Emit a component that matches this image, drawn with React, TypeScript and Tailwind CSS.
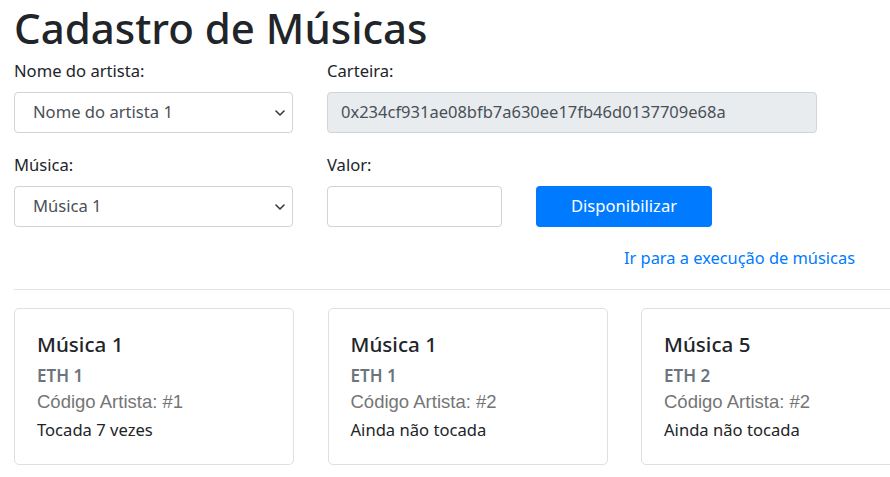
import React from "react";

interface Song {
  title: string;
  price: string;
  artist: string;
  plays: string;
}

const songs: Song[] = [
  { title: "Música 1", price: "ETH 1", artist: "#1", plays: "Tocada 7 vezes" },
  { title: "Música 1", price: "ETH 1", artist: "#2", plays: "Ainda não tocada" },
  { title: "Música 5", price: "ETH 2", artist: "#2", plays: "Ainda não tocada" },
];

function Chevron() {
  return (
    <svg width="10" height="6" viewBox="0 0 10 6" className="shrink-0">
      <path d="M1 1l4 4 4-4" fill="none" stroke="#343a40" strokeWidth="1.6" strokeLinecap="round" strokeLinejoin="round" />
    </svg>
  );
}

function Select({ value }: { value: string }) {
  return (
    <div className="flex h-[41px] items-center justify-between rounded-[4px] border border-[#ced4da] bg-white pl-[18px] pr-[7px] text-[16.6px] text-[#495057]">
      <span>{value}</span>
      <Chevron />
    </div>
  );
}

function Label({ children }: { children: React.ReactNode }) {
  return <label className="mb-[8px] block text-[16.6px] leading-[26px]">{children}</label>;
}

function SongCard({ song }: { song: Song }) {
  return (
    <div className="h-[157px] w-[280px] shrink-0 rounded-[5px] border border-[#dfdfdf] px-[22px] pt-[22px]">
      <h5 className="mb-[8px] text-[20.6px] font-medium leading-[26px]">{song.title}</h5>
      <h6 className="text-[17px] font-semibold leading-[21px] text-[#6c757d]">{song.price}</h6>
      <p className="mt-[4px] font-['Liberation_Sans',Arial,sans-serif] text-[18.5px] leading-[24px] text-[#757575]">
        Código Artista: {song.artist}
      </p>
      <p className="mt-[3px] text-[16.6px] leading-[26px]">{song.plays}</p>
    </div>
  );
}

export default function App() {
  return (
    <div className="h-[477px] w-[890px] overflow-hidden bg-white pl-[14px] font-['Noto_Sans',sans-serif] text-[#212529]">
      <h1 className="pt-[1px] text-[42px] font-medium leading-[54px]">Cadastro de Músicas</h1>

      <div className="mt-[3px] flex gap-[34px]">
        <div className="w-[279px]">
          <Label>Nome do artista:</Label>
          <Select value="Nome do artista 1" />
        </div>
        <div className="w-[490px]">
          <Label>Carteira:</Label>
          <div className="flex h-[41px] items-center rounded-[4px] border border-[#ced4da] bg-[#e9ecef] pl-[13px] text-[16.5px] text-[#495057]">
            0x234cf931ae08bfb7a630ee17fb46d0137709e68a
          </div>
        </div>
      </div>

      <div className="mt-[19px] flex items-end gap-[34px]">
        <div className="w-[279px]">
          <Label>Música:</Label>
          <Select value="Música 1" />
        </div>
        <div className="w-[175px]">
          <Label>Valor:</Label>
          <div className="h-[41px] rounded-[4px] border border-[#ced4da] bg-white" />
        </div>
        <button className="h-[41px] w-[176px] rounded-[4px] bg-[#007bff] text-[16.6px] text-white">
          Disponibilizar
        </button>
      </div>

      <div className="mt-[18px] flex justify-end pr-[35px]">
        <a className="text-[16.4px] leading-[26px] text-[#007bff]">Ir para a execução de músicas</a>
      </div>

      <hr className="mt-[18px] border-t border-[#e5e5e5]" />

      <div className="mt-[18px] flex gap-[33.5px]">
        {songs.map((song, i) => (
          <SongCard key={i} song={song} />
        ))}
      </div>
    </div>
  );
}
